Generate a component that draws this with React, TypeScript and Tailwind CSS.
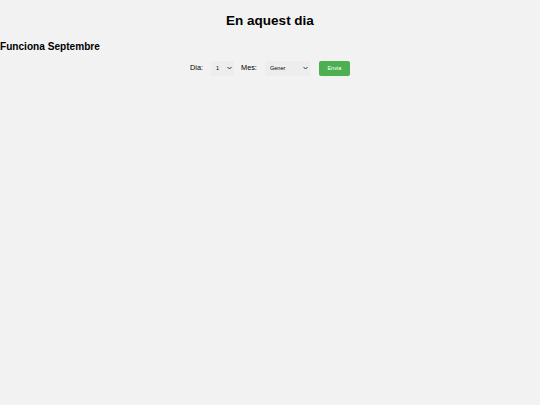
import React, { useState } from 'react';

const Chevron: React.FC = () => (
  <svg
    viewBox="0 0 10 6"
    className="pointer-events-none absolute right-[2px] top-1/2 h-[3px] w-[5px] -translate-y-1/2"
    fill="none"
    stroke="#222"
    strokeWidth="1.8"
  >
    <path d="M1 1l4 4 4-4" />
  </svg>
);

const App: React.FC = () => {
  const [dia, setDia] = useState('1');
  const [mes, setMes] = useState('Gener');

  const mesos = [
    'Gener', 'Febrer', 'Març', 'Abril', 'Maig', 'Juny',
    'Juliol', 'Agost', 'Setembre', 'Octubre', 'Novembre', 'Desembre',
  ];

  return (
    <div className="min-h-screen bg-[#f2f2f2] text-black font-['Liberation_Sans',Arial,sans-serif]">
      <h1 className="pt-[13px] text-center text-[13.5px] font-bold leading-[15.5px]">En aquest dia</h1>
      <h2 className="mt-[12px] text-[10.1px] font-bold leading-[12px]">Funciona Septembre</h2>

      <form
        className="mt-[8px] flex items-center justify-center text-[7.3px]"
        onSubmit={(e) => e.preventDefault()}
      >
        <label htmlFor="dia" className="mr-[8px]">Dia:</label>
        <div className="relative">
          <select
            id="dia"
            value={dia}
            onChange={(e) => setDia(e.target.value)}
            className="block h-[15px] w-[23px] appearance-none rounded-[2px] bg-[#ededed] pl-[5px] text-[5.6px] outline-none"
          >
            {Array.from({ length: 31 }, (_, i) => (
              <option key={i + 1} value={String(i + 1)}>{i + 1}</option>
            ))}
          </select>
          <Chevron />
        </div>
        <label htmlFor="mes" className="ml-[7px] mr-[8px]">Mes:</label>
        <div className="relative">
          <select
            id="mes"
            value={mes}
            onChange={(e) => setMes(e.target.value)}
            className="block h-[15px] w-[45px] appearance-none rounded-[2px] bg-[#ededed] pl-[5px] text-[5.6px] outline-none"
          >
            {mesos.map((m) => (
              <option key={m} value={m}>{m}</option>
            ))}
          </select>
          <Chevron />
        </div>
        <button
          type="submit"
          className="ml-[9px] h-[15px] w-[31px] rounded-[2px] bg-[#4caf50] text-[5.6px] text-white"
        >
          Envia
        </button>
      </form>
    </div>
  );
};

export default App;
